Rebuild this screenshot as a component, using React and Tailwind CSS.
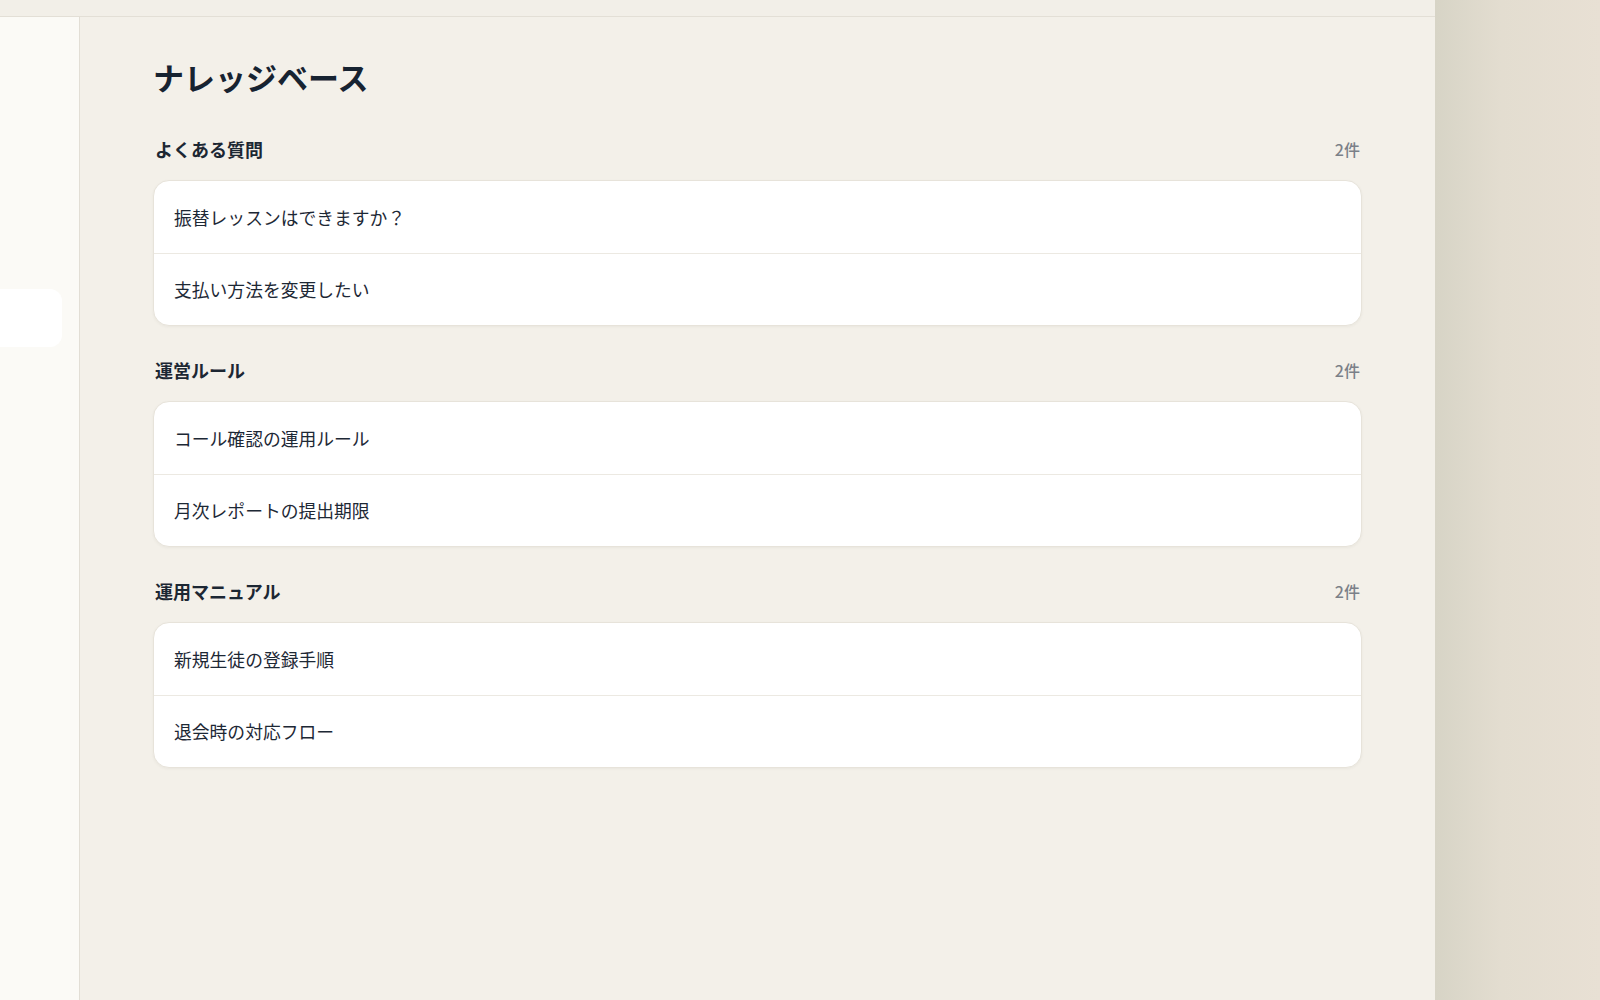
import React from "react";

const sections = [
  { title: "よくある質問", items: ["振替レッスンはできますか？", "支払い方法を変更したい"] },
  { title: "運営ルール", items: ["コール確認の運用ルール", "月次レポートの提出期限"] },
  { title: "運用マニュアル", items: ["新規生徒の登録手順", "退会時の対応フロー"] },
];

function Section({ title, items }) {
  return (
    <section className="mb-[31px]">
      <div className="flex h-[26px] items-center justify-between px-[2px] mb-[18px]">
        <h2 className="text-[18px] font-bold text-[#1c2733] leading-[26px]">{title}</h2>
        <span className="text-[16px] font-medium text-[#7b8088]">{items.length}件</span>
      </div>
      <div className="overflow-hidden rounded-2xl border border-[#e7e3da] bg-white shadow-[0_1px_3px_rgba(60,50,30,0.05)]">
        {items.map((item, i) => (
          <div
            key={item}
            className={
              "flex h-[72px] items-center px-5 text-[17.8px] text-[#1d2835] " +
              (i > 0 ? "border-t border-[#ece9e2]" : "")
            }
          >
            {item}
          </div>
        ))}
      </div>
    </section>
  );
}

export default function App() {
  return (
    <div
      className="flex h-[1000px] w-[1600px] overflow-hidden"
      style={{ fontFamily: '"Noto Sans CJK JP", "Noto Sans", sans-serif' }}
    >
      <div className="flex w-[1435px] flex-col">
        {/* top bar */}
        <div className="h-[17px] shrink-0 border-b border-[#e3dfd6] bg-[#f2efe8]" />
        <div className="flex flex-1 min-h-0">
          {/* collapsed sidebar */}
          <aside className="w-[80px] shrink-0 border-r border-[#e2ded5] bg-[#fbfaf6] pt-[272px]">
            <div className="h-[58px] w-[62px] rounded-r-xl bg-white" />
          </aside>
          {/* main content */}
          <main className="flex-1 bg-[#f3f0e9] pl-[73px] pr-[73px] pt-[40px]">
            <h1 className="mb-[39px] text-[31px] font-bold leading-[40px] text-[#172331]">
              ナレッジベース
            </h1>
            {sections.map((s) => (
              <Section key={s.title} {...s} />
            ))}
          </main>
        </div>
      </div>
      {/* side panel */}
      <div className="w-[165px] shrink-0 bg-gradient-to-r from-[#d7d4c6] via-[#e3ddd0] via-40% to-[#e8e0d4]" />
    </div>
  );
}
